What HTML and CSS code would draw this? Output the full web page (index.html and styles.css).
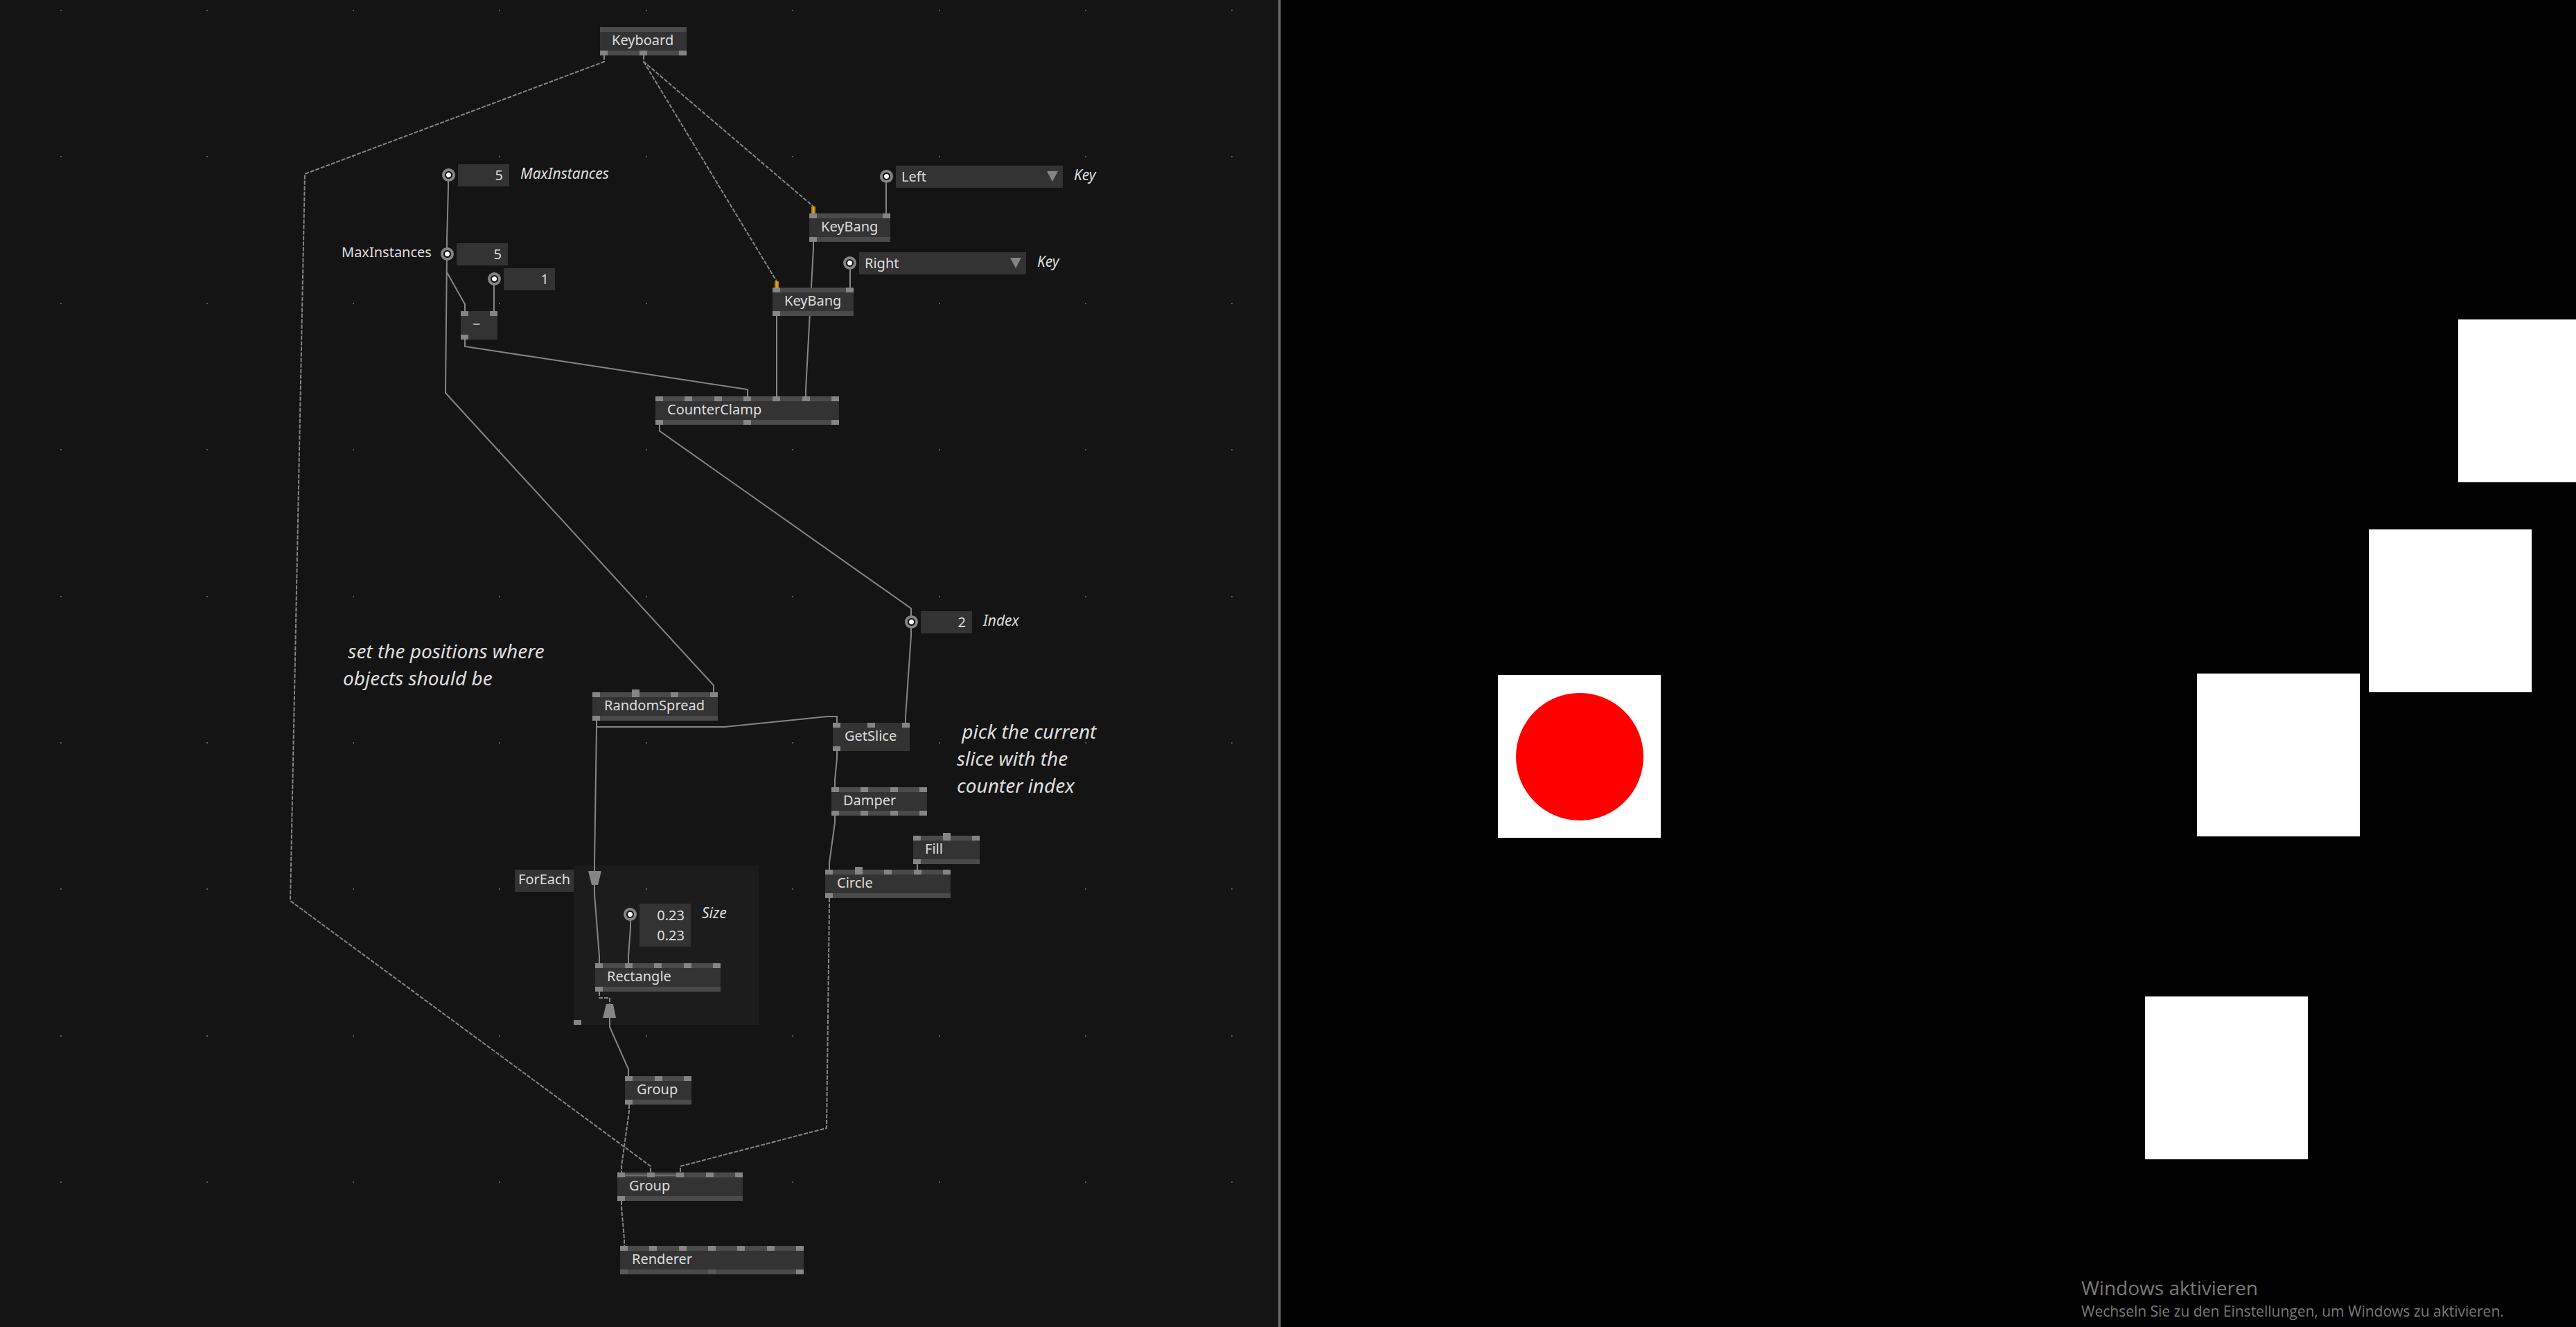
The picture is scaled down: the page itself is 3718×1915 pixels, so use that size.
FILE: index.html
```html
<!DOCTYPE html>
<html lang="en">
<head>
<meta charset="utf-8">
<title>Patch editor</title>
<link rel="stylesheet" href="styles.css">
</head>
<body>
<main class="workspace">
  <section class="patch" aria-label="Patch">
    <div class="region foreach-region"><span class="pin region-pin"></span></div>

    <svg class="links" aria-hidden="true">
      <defs>
        <path id="dots" d="M87 15h2M298 15h2M509 15h2M720 15h2M932 15h2M1143 15h2M1355 15h2M1566 15h2M1777 15h2"/>
      </defs>
      <g class="grid-dots">
        <use href="#dots"/><use href="#dots" y="211"/><use href="#dots" y="423"/>
        <use href="#dots" y="634"/><use href="#dots" y="846"/><use href="#dots" y="1057"/>
        <use href="#dots" y="1268"/><use href="#dots" y="1480"/><use href="#dots" y="1691"/>
      </g>
      <g class="wire">
        <path d="M647 252V272L645 346V366"/>
        <path d="M645 366L643 567L1030 989V999"/>
        <path d="M645 393L671 439V449"/>
        <path d="M713 402V449"/>
        <path d="M671 490V500L1079 562V572"/>
        <path d="M1279 254V308"/>
        <path d="M1227 379V415"/>
        <path d="M1174 348V358L1163 562V572"/>
        <path d="M1121 456V572"/>
        <path d="M952 613V622L1315 878V897V917L1307 1034V1043"/>
        <path d="M861 1040V1050L858 1247V1257"/>
        <path d="M861 1049H1046L1194 1034H1208V1043"/>
        <path d="M1208 1084V1094L1205 1126V1136"/>
        <path d="M1205 1177V1187L1197 1245V1255"/>
        <path d="M1324 1247V1255"/>
        <path d="M858 1277V1290L865 1380V1390"/>
        <path d="M910 1320V1339L907 1380V1390"/>
        <path d="M880 1469V1482L907 1543V1553"/>
      </g>
      <g class="wire dashed">
        <path d="M872 80V89L440 251L419 1300L939 1683V1692"/>
        <path d="M929 80V89L1174 298"/>
        <path d="M929 89L1121 406"/>
        <path d="M1197 1296V1306L1193 1628L982 1683V1692"/>
        <path d="M865 1431V1440H880V1449"/>
        <path d="M908 1594V1604L897 1683V1692"/>
        <path d="M897 1733V1742L901 1788V1798"/>
      </g>
      <path class="bang" d="M1174 298V308M1121 406V415"/>
      <path class="bang-core" d="M1174 298V308M1121 406V415"/>
      <g class="gate">
        <path d="M849 1257H868L863 1277H854Z"/>
        <path d="M875 1449H885L889 1469H870Z"/>
      </g>
    </svg>

    <div class="node keyboard">
      <div class="pins"></div><div class="title">Keyboard</div>
      <div class="pins"><i class="pin"></i><i class="pin"></i><i class="pin"></i></div>
    </div>
    <div class="node keybang-left">
      <div class="pins"><i class="pin"></i><i class="pin"></i></div><div class="title">KeyBang</div>
      <div class="pins"><i class="pin"></i></div>
    </div>
    <div class="node keybang-right">
      <div class="pins"><i class="pin"></i><i class="pin"></i></div><div class="title">KeyBang</div>
      <div class="pins"><i class="pin"></i></div>
    </div>
    <div class="node plain minus">
      <div class="pins"><i class="pin"></i><i class="pin"></i></div><div class="title">−</div>
      <div class="pins"><i class="pin"></i></div>
    </div>
    <div class="node counter-clamp">
      <div class="pins"><i class="pin"></i><i class="pin"></i><i class="pin"></i><i class="pin"></i><i class="pin"></i><i class="pin"></i><i class="pin"></i></div>
      <div class="title">CounterClamp</div>
      <div class="pins"><i class="pin"></i><i class="pin"></i><i class="pin"></i></div>
    </div>
    <div class="node random-spread">
      <div class="pins"><i class="pin"></i><i class="pin tall"></i><i class="pin"></i><i class="pin"></i></div>
      <div class="title">RandomSpread</div>
      <div class="pins"><i class="pin"></i></div>
    </div>
    <div class="node plain get-slice">
      <div class="pins"><i class="pin"></i><i class="pin"></i><i class="pin"></i></div>
      <div class="title">GetSlice</div>
      <div class="pins"><i class="pin"></i></div>
    </div>
    <div class="node damper">
      <div class="pins"><i class="pin"></i><i class="pin"></i><i class="pin"></i><i class="pin"></i></div>
      <div class="title">Damper</div>
      <div class="pins"><i class="pin"></i><i class="pin"></i><i class="pin"></i><i class="pin"></i></div>
    </div>
    <div class="node fill">
      <div class="pins"><i class="pin"></i><i class="pin tall"></i><i class="pin"></i></div>
      <div class="title">Fill</div>
      <div class="pins"><i class="pin"></i></div>
    </div>
    <div class="node circle">
      <div class="pins"><i class="pin"></i><i class="pin tall"></i><i class="pin"></i><i class="pin"></i><i class="pin"></i></div>
      <div class="title">Circle</div>
      <div class="pins"><i class="pin"></i></div>
    </div>
    <div class="node rectangle">
      <div class="pins"><i class="pin"></i><i class="pin"></i><i class="pin"></i><i class="pin"></i><i class="pin"></i></div>
      <div class="title">Rectangle</div>
      <div class="pins"><i class="pin"></i></div>
    </div>
    <div class="node group-inner">
      <div class="pins"><i class="pin"></i><i class="pin"></i><i class="pin"></i></div>
      <div class="title">Group</div>
      <div class="pins"><i class="pin"></i></div>
    </div>
    <div class="node group-outer">
      <div class="pins joined"><i class="pin"></i><i class="pin"></i><i class="pin"></i><i class="pin"></i><i class="pin"></i></div>
      <div class="title">Group</div>
      <div class="pins"><i class="pin"></i></div>
    </div>
    <div class="node renderer">
      <div class="pins"><i class="pin"></i><i class="pin"></i><i class="pin"></i><i class="pin"></i><i class="pin"></i><i class="pin"></i><i class="pin"></i></div>
      <div class="title">Renderer</div>
      <div class="pins"><i class="pin dim"></i><i class="pin dim"></i><i class="pin"></i></div>
    </div>

    <div class="region-name">ForEach</div>

    <div class="pad pad-max">
      <span class="knob"></span>
      <div class="box"><input id="max" class="value" type="text" value="5"></div>
      <label class="name" for="max">MaxInstances</label>
    </div>
    <div class="pad pad-max-local">
      <label class="name input-name" for="max-local">MaxInstances</label>
      <span class="knob"></span>
      <div class="box"><input id="max-local" class="value" type="text" value="5"></div>
    </div>
    <div class="pad pad-one">
      <span class="knob"></span>
      <div class="box"><input class="value" type="text" value="1" aria-label="Subtrahend"></div>
    </div>
    <div class="pad pad-left">
      <span class="knob"></span>
      <div class="box choice">
        <select id="key-left" class="picker"><option>Left</option><option>Right</option></select>
        <svg class="arrow" viewBox="0 0 16 15" aria-hidden="true"><path d="M0 0H16L8 15Z"/></svg>
      </div>
      <label class="name" for="key-left">Key</label>
    </div>
    <div class="pad pad-right">
      <span class="knob"></span>
      <div class="box choice">
        <select id="key-right" class="picker"><option>Right</option><option>Left</option></select>
        <svg class="arrow" viewBox="0 0 16 15" aria-hidden="true"><path d="M0 0H16L8 15Z"/></svg>
      </div>
      <label class="name" for="key-right">Key</label>
    </div>
    <div class="pad pad-index">
      <span class="knob"></span>
      <div class="box"><input id="index" class="value" type="text" value="2"></div>
      <label class="name" for="index">Index</label>
    </div>
    <div class="pad pad-size">
      <span class="knob"></span>
      <div class="box vector">
        <input id="size-x" class="value" type="text" value="0.23">
        <input class="value" type="text" value="0.23" aria-label="Size Y">
      </div>
      <label class="name" for="size-x">Size</label>
    </div>

    <p class="note note-positions"> set the positions where
objects should be</p>
    <p class="note note-slice"> pick the current
slice with the
counter index</p>
  </section>

  <div class="divider" role="separator"></div>

  <section class="output" aria-label="Renderer output">
    <div class="square square-a"></div>
    <div class="square square-b"></div>
    <div class="square square-c"></div>
    <div class="square square-d"></div>
    <div class="square square-e"><div class="marker"></div></div>
    <div class="activation" lang="de">
      <p class="activation-title">Windows aktivieren</p>
      <p class="activation-text">Wechseln Sie zu den Einstellungen, um Windows zu aktivieren.</p>
    </div>
  </section>
</main>
</body>
</html>
```
FILE: styles.css
```css
:root {
  --canvas: #141414;
  --body: #333333;
  --strip: #4a4a4a;
  --pin: #858585;
  --text: #dedede;
}

* { box-sizing: border-box; }

body {
  margin: 0;
  background: #000;
  color: var(--text);
  font: 20px/24px "Noto Sans", "Open Sans", sans-serif;
}

.workspace {
  display: grid;
  grid-template-columns: 1845fr 4px 1869fr;
  min-height: 100vh;
}

.patch {
  position: relative;
  overflow: hidden;
  background: var(--canvas);
}

.divider {
  background: #444;
  border-left: 2px solid #6e6e6e;
}

.output {
  position: relative;
  overflow: hidden;
  background: #000;
}

/* Links */
.links {
  position: absolute;
  inset: 0;
  width: 100%;
  height: 100%;
  fill: none;
}
.grid-dots { stroke: #5c5c5c; stroke-width: 2; }
.wire { stroke: var(--pin); stroke-width: 2; }
.dashed { stroke-dasharray: 6 2; }
.bang { stroke: #c08000; stroke-width: 6; }
.bang-core { stroke: #dea32c; stroke-width: 2; }
.gate { fill: var(--pin); }

/* Nodes */
.node {
  position: absolute;
  display: flex;
  flex-direction: column;
  background: var(--body);
}
.pins {
  display: flex;
  justify-content: space-between;
  height: 7px;
  background: var(--strip);
}
.plain .pins { background: none; }
.pin {
  width: 11px;
  height: 7px;
  background: var(--pin);
}
.tall { height: 11px; margin-top: -4px; }
.dim { background: #5a5a5a; }
.joined {
  background: linear-gradient(#6c6c6c, #6c6c6c) 0 3px / 90px 2px no-repeat var(--strip);
}
.title {
  height: 27px;
  padding-left: 17px;
  white-space: nowrap;
}

.keyboard { left: 866px; top: 39px; width: 125px; }
.keybang-left { left: 1168px; top: 308px; width: 117px; }
.keybang-right { left: 1115px; top: 415px; width: 117px; }
.minus { left: 665px; top: 449px; width: 53px; }
.counter-clamp { left: 946px; top: 572px; width: 265px; }
.random-spread { left: 855px; top: 999px; width: 181px; }
.get-slice { left: 1202px; top: 1043px; width: 111px; }
.damper { left: 1200px; top: 1136px; width: 138px; }
.fill { left: 1318px; top: 1206px; width: 96px; }
.circle { left: 1191px; top: 1255px; width: 181px; }
.rectangle { left: 859px; top: 1390px; width: 181px; }
.group-inner { left: 902px; top: 1553px; width: 96px; }
.group-outer { left: 891px; top: 1692px; width: 181px; }
.renderer { left: 895px; top: 1798px; width: 265px; }

/* ForEach region */
.region {
  position: absolute;
  display: flex;
  align-items: flex-end;
  background: #1c1c1c;
}
.foreach-region { left: 828px; top: 1249px; width: 267px; height: 230px; }
.region-name {
  position: absolute;
  left: 743px;
  top: 1255px;
  width: 85px;
  height: 32px;
  padding-left: 5px;
  line-height: 27px;
  background: var(--body);
}

/* Pads */
.pad {
  position: absolute;
  display: flex;
  align-items: flex-start;
}
.knob {
  width: 19px;
  height: 19px;
  margin: 6px 4px 0 0;
  border-radius: 50%;
  background: radial-gradient(circle, #fff 3px, #111 4px, #111 5px, var(--pin) 6px);
}
.box {
  display: flex;
  flex-direction: column;
  width: 74px;
  height: 32px;
  padding-top: 1px;
  background: var(--body);
}
.vector { height: 62px; padding-top: 2px; }
.value {
  width: 100%;
  height: 29px;
  padding: 0 9px 0 0;
  border: 0;
  background: none;
  color: inherit;
  font: inherit;
  line-height: 29px;
  text-align: right;
}
.choice {
  position: relative;
  width: 241px;
}
.picker {
  width: 100%;
  height: 29px;
  padding: 0 0 0 8px;
  border: 0;
  appearance: none;
  background: none;
  color: inherit;
  font: inherit;
}
.arrow {
  position: absolute;
  right: 7px;
  top: 8px;
  width: 16px;
  height: 15px;
  fill: var(--pin);
}
.name {
  margin-left: 16px;
  font-size: 21px;
  font-style: italic;
  line-height: 26px;
}
.input-name {
  width: 143px;
  margin-left: 0;
  font-size: 20px;
  font-style: normal;
}

.pad-max { left: 638px; top: 237px; }
.pad-max-local { left: 493px; top: 351px; }
.pad-one { left: 704px; top: 387px; }
.pad-left { left: 1270px; top: 239px; }
.pad-right { left: 1217px; top: 364px; }
.pad-index { left: 1306px; top: 882px; }
.pad-size { left: 900px; top: 1304px; }

/* Notes */
.note {
  position: absolute;
  margin: 0;
  font-size: 28px;
  font-style: italic;
  line-height: 39px;
  white-space: pre;
}
.note-positions { left: 495px; top: 920px; }
.note-slice { left: 1381px; top: 1036px; }

/* Render output */
.square {
  position: absolute;
  display: grid;
  place-items: center;
  width: 235px;
  height: 235px;
  background: #fff;
}
.square-a { left: 1699px; top: 461px; }
.square-b { left: 1570px; top: 764px; }
.square-c { left: 1322px; top: 972px; }
.square-d { left: 1247px; top: 1438px; }
.square-e { left: 313px; top: 974px; }
.marker {
  width: 184px;
  height: 184px;
  border-radius: 50%;
  background: #f00;
}
.activation {
  position: absolute;
  left: 1155px;
  bottom: 8px;
  color: #7a7a7a;
  font-family: "Open Sans", "Noto Sans", sans-serif;
}
.activation p { margin: 0; white-space: nowrap; }
.activation-title { font-size: 28px; line-height: 39px; }
.activation-text { font-size: 21px; line-height: 29px; }
```
